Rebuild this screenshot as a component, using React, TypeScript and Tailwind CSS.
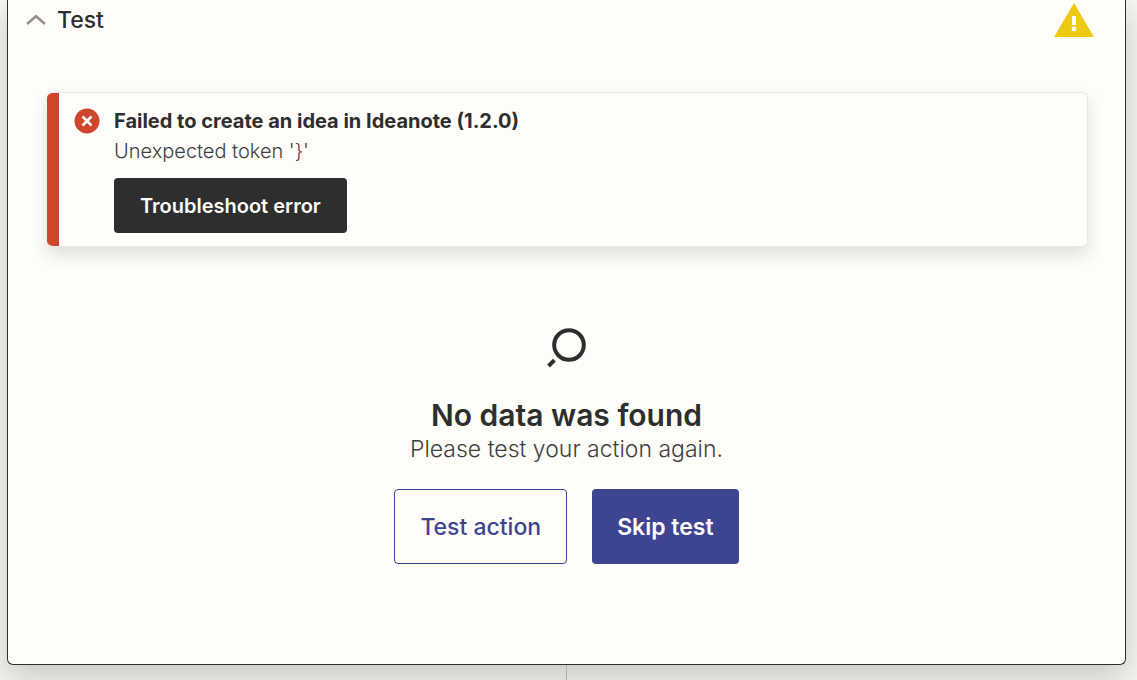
import React from 'react'

interface ErrorAlertProps {
  title: string
  message: string
}

const ChevronUp = () => (
  <svg width="20" height="12" viewBox="0 0 20 12" fill="none" aria-hidden="true">
    <path d="M1 10L10 2.2L19 10" stroke="#95928e" strokeWidth="2.6" />
  </svg>
)

const WarningIcon = () => (
  <svg width="40" height="34" viewBox="0 0 40 34" role="img" aria-label="Warning">
    <path d="M20 0L40 34H0Z" fill="#edc911" />
    <rect x="18" y="13" width="4" height="9" fill="#fffdf9" />
    <circle cx="20" cy="26" r="2.4" fill="#fffdf9" />
  </svg>
)

const ErrorIcon = () => (
  <svg width="26" height="26" viewBox="0 0 26 26" role="img" aria-label="Error">
    <circle cx="13" cy="13" r="12.5" fill="#cf462d" />
    <path d="M8.5 8.5L17.5 17.5M17.5 8.5L8.5 17.5" stroke="#fffdf9" strokeWidth="2.6" />
  </svg>
)

const SearchIcon = () => (
  <svg width="40" height="40" viewBox="0 0 40 40" fill="none" stroke="#2d2e2e" strokeWidth="4" aria-hidden="true">
    <circle cx="22" cy="17" r="14.8" />
    <path d="M7.4 32.2L1.6 38" />
  </svg>
)

const ErrorAlert: React.FC<ErrorAlertProps> = ({ title, message }) => (
  <div
    role="alert"
    className="flex overflow-hidden rounded-md border border-l-0 border-[#e8e7e4] bg-[#fffdf9] shadow-[0_8px_16px_rgba(45,46,46,0.14)]"
  >
    <div className="w-3 shrink-0 bg-[#cf462d]" />
    <div className="flex gap-[14px] pt-[15px] pb-[13px] pl-[15px]">
      <ErrorIcon />
      <div>
        <p className="text-xl leading-[26px] font-bold">{title}</p>
        <p className="mt-1 text-xl leading-[26px] font-light text-[#403f3e]">{message}</p>
        <button
          type="button"
          className="mt-[14px] h-[55px] rounded-[4px] bg-[#2d2e2e] px-[26px] text-xl font-semibold text-[#fffdf9]"
        >
          Troubleshoot error
        </button>
      </div>
    </div>
  </div>
)

const App: React.FC = () => {
  return (
    <div className="flex min-h-screen flex-col overflow-hidden bg-[#f7f6f1] font-['Inter',sans-serif] text-[#2d2e2e]">
      <section className="mr-[11px] ml-[7px] rounded-b-md border border-t-0 border-[#2d2e2e] bg-[#fffdf9] shadow-[0_12px_32px_rgba(45,46,46,0.24)]">
        <header className="flex h-10 items-center justify-between pr-[31px] pl-[18px]">
          <button type="button" className="flex items-center gap-[11px] text-[23px] leading-8 font-medium">
            <ChevronUp />
            Test
          </button>
          <WarningIcon />
        </header>

        <div className="pt-[52px] pb-[100px]">
          <div className="pr-[37px] pl-[39px]">
            <ErrorAlert title="Failed to create an idea in Ideanote (1.2.0)" message="Unexpected token '}'" />
          </div>

          <div className="mt-[81px] flex flex-col items-center">
            <SearchIcon />
            <h2 className="mt-[27px] text-[30px] leading-10 font-semibold">No data was found</h2>
            <p className="text-[23px] leading-7 font-light text-[#403f3e]">Please test your action again.</p>
            <div className="mt-[26px] flex gap-[25px]">
              <button
                type="button"
                className="h-[75px] rounded-[4px] border border-[#3d4592] px-[25px] text-[23px] leading-8 font-medium text-[#3d4592]"
              >
                Test action
              </button>
              <button
                type="button"
                className="h-[75px] rounded-[4px] bg-[#3d4592] px-[25px] text-[23px] leading-8 font-semibold text-[#fffdf9]"
              >
                Skip test
              </button>
            </div>
          </div>
        </div>
      </section>
      <div className="mr-[11px] ml-[7px] flex grow justify-center">
        <div className="z-10 w-px bg-[#b0afad]" />
      </div>
    </div>
  )
}

export default App
